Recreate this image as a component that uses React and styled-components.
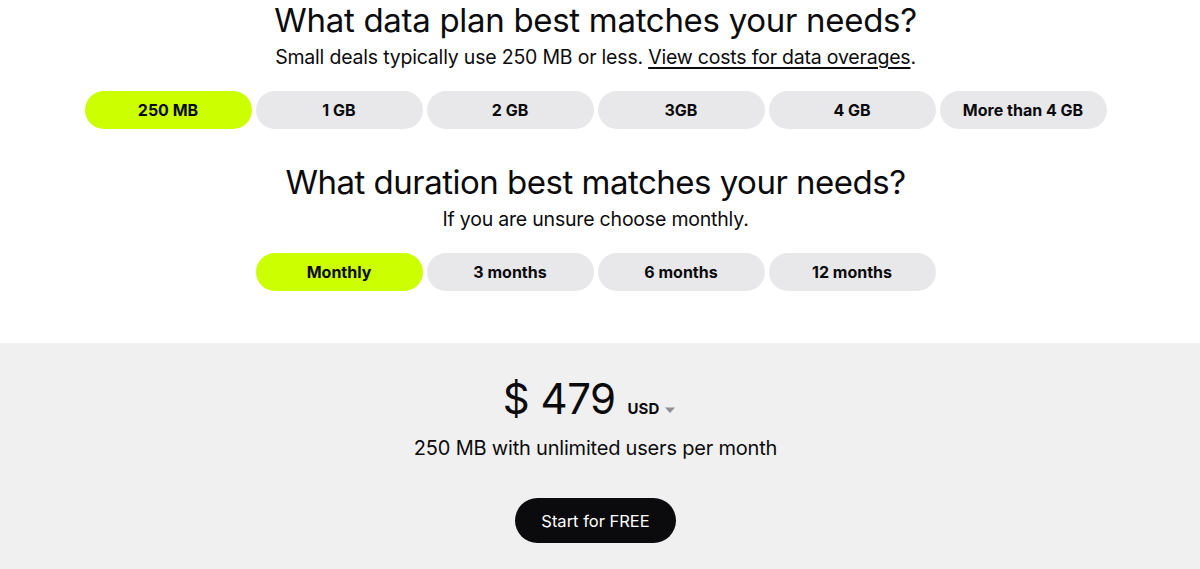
import React, { useState } from 'react';
import styled, { createGlobalStyle } from 'styled-components';

const GlobalStyle = createGlobalStyle`
  html, body {
    margin: 0;
    padding: 0;
    background: #fff;
    font-family: Inter, 'Liberation Sans', sans-serif;
    color: #0b0b0d;
  }
`;

const dataPlans = ['250 MB', '1 GB', '2 GB', '3GB', '4 GB', 'More than 4 GB'];
const durations = ['Monthly', '3 months', '6 months', '12 months'];

export default function App() {
  const [plan, setPlan] = useState(0);
  const [duration, setDuration] = useState(0);

  return (
    <Page>
      <GlobalStyle />
      <Chooser>
        <Title>What data plan best matches your needs?</Title>
        <Subtitle>
          Small deals typically use 250 MB or less. <Link href="#">View costs for data overages</Link>.
        </Subtitle>
        <OptionRow>
          {dataPlans.map((p, i) => (
            <Option key={p} active={i === plan} onClick={() => setPlan(i)}>
              {p}
            </Option>
          ))}
        </OptionRow>

        <Title className="second">What duration best matches your needs?</Title>
        <Subtitle>If you are unsure choose monthly.</Subtitle>
        <OptionRow>
          {durations.map((d, i) => (
            <Option key={d} active={i === duration} onClick={() => setDuration(i)}>
              {d}
            </Option>
          ))}
        </OptionRow>
      </Chooser>

      <Summary>
        <Price>
          <span className="amount">$ 479</span>
          <Currency>
            USD
            <svg width="12" height="8" viewBox="0 0 12 8">
              <path d="M1 1.5h10L6 7z" fill="#8e8e93" />
            </svg>
          </Currency>
        </Price>
        <Description>250 MB with unlimited users per month</Description>
        <StartButton>Start for FREE</StartButton>
      </Summary>
    </Page>
  );
}

const Page = styled.div`
  display: flex;
  flex-direction: column;
  min-height: 569px;
`;

const Chooser = styled.section`
  display: flex;
  flex-direction: column;
  align-items: center;
  padding: 0 9px 52px 0;
`;

const Title = styled.h2`
  margin: 0;
  font-size: 33px;
  font-weight: 400;
  line-height: 40px;
  letter-spacing: -0.3px;
  &.second {
    margin-top: 33px;
    letter-spacing: -0.5px;
  }
`;

const Subtitle = styled.p`
  margin: 3px 0 0;
  font-size: 19.5px;
  line-height: 28px;
  letter-spacing: -0.2px;
`;

const Link = styled.a`
  color: inherit;
  text-decoration: underline;
  text-underline-offset: 3px;
  text-decoration-thickness: 2px;
`;

const OptionRow = styled.div`
  display: flex;
  gap: 4px;
  margin-top: 20px;
`;

const Option = styled.button`
  width: 167px;
  height: 38px;
  border: 0;
  border-radius: 19px;
  background: ${({ active }) => (active ? '#ccff00' : '#e8e8ea')};
  color: #0b0b0d;
  font-family: inherit;
  font-size: 16px;
  font-weight: 700;
  cursor: pointer;
`;

const Summary = styled.section`
  flex: 1;
  background: #f0f0f0;
  display: flex;
  flex-direction: column;
  align-items: center;
  padding: 30px 9px 26px 0;
`;

const Price = styled.div`
  display: flex;
  align-items: baseline;
  gap: 12px;
  margin-right: 12px;
  .amount {
    font-size: 42px;
    line-height: 52px;
    letter-spacing: -0.5px;
  }
`;

const Currency = styled.span`
  display: inline-flex;
  align-items: center;
  gap: 5px;
  font-size: 15px;
  font-weight: 700;
  svg {
    margin-top: 2px;
  }
`;

const Description = styled.p`
  margin: 9px 0 0;
  font-size: 20px;
  line-height: 28px;
  letter-spacing: -0.2px;
`;

const StartButton = styled.button`
  margin-top: 36px;
  width: 161px;
  height: 45px;
  border: 0;
  border-radius: 23px;
  background: #0b0b0d;
  color: #fff;
  font-family: inherit;
  font-size: 16.5px;
  cursor: pointer;
`;
